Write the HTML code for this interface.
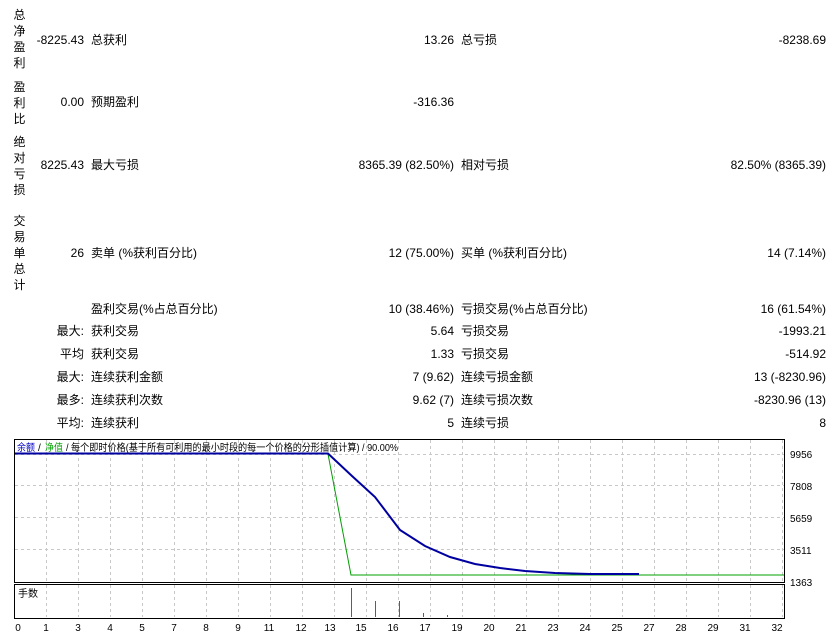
<!DOCTYPE html>
<html><head><meta charset="utf-8"><style>
body{margin:0;width:839px;height:638px;background:#fff;position:relative;overflow:hidden;font-family:"Liberation Sans","Noto Sans CJK SC",sans-serif;font-size:12px;color:#000}
.t{position:absolute;white-space:nowrap;line-height:14px}
.r{text-align:right}
.v{position:absolute;left:13px;width:13px;line-height:16px;text-align:center}
</style></head><body>
<div class="v" style="top:7px">总<br>净<br>盈<br>利</div>
<div class="v" style="top:79px">盈<br>利<br>比</div>
<div class="v" style="top:134px">绝<br>对<br>亏<br>损</div>
<div class="v" style="top:213px">交<br>易<br>单<br>总<br>计</div>

<div class="t r" style="right:755px;top:33px">-8225.43</div><div class="t" style="left:91px;top:33px">总获利</div>
<div class="t r" style="right:385px;top:33px">13.26</div><div class="t" style="left:461px;top:33px">总亏损</div>
<div class="t r" style="right:13px;top:33px">-8238.69</div>

<div class="t r" style="right:755px;top:95px">0.00</div><div class="t" style="left:91px;top:95px">预期盈利</div>
<div class="t r" style="right:385px;top:95px">-316.36</div>

<div class="t r" style="right:755px;top:158px">8225.43</div><div class="t" style="left:91px;top:158px">最大亏损</div>
<div class="t r" style="right:385px;top:158px">8365.39 (82.50%)</div><div class="t" style="left:461px;top:158px">相对亏损</div>
<div class="t r" style="right:13px;top:158px">82.50% (8365.39)</div>

<div class="t r" style="right:755px;top:246px">26</div><div class="t" style="left:91px;top:246px">卖单 (%获利百分比)</div>
<div class="t r" style="right:385px;top:246px">12 (75.00%)</div><div class="t" style="left:461px;top:246px">买单 (%获利百分比)</div>
<div class="t r" style="right:13px;top:246px">14 (7.14%)</div>

<div class="t" style="left:91px;top:302px">盈利交易(%占总百分比)</div>
<div class="t r" style="right:385px;top:302px">10 (38.46%)</div><div class="t" style="left:461px;top:302px">亏损交易(%占总百分比)</div>
<div class="t r" style="right:13px;top:302px">16 (61.54%)</div>

<div class="t r" style="right:755px;top:324px">最大:</div><div class="t" style="left:91px;top:324px">获利交易</div>
<div class="t r" style="right:385px;top:324px">5.64</div><div class="t" style="left:461px;top:324px">亏损交易</div>
<div class="t r" style="right:13px;top:324px">-1993.21</div>

<div class="t r" style="right:755px;top:347px">平均</div><div class="t" style="left:91px;top:347px">获利交易</div>
<div class="t r" style="right:385px;top:347px">1.33</div><div class="t" style="left:461px;top:347px">亏损交易</div>
<div class="t r" style="right:13px;top:347px">-514.92</div>

<div class="t r" style="right:755px;top:370px">最大:</div><div class="t" style="left:91px;top:370px">连续获利金额</div>
<div class="t r" style="right:385px;top:370px">7 (9.62)</div><div class="t" style="left:461px;top:370px">连续亏损金额</div>
<div class="t r" style="right:13px;top:370px">13 (-8230.96)</div>

<div class="t r" style="right:755px;top:393px">最多:</div><div class="t" style="left:91px;top:393px">连续获利次数</div>
<div class="t r" style="right:385px;top:393px">9.62 (7)</div><div class="t" style="left:461px;top:393px">连续亏损次数</div>
<div class="t r" style="right:13px;top:393px">-8230.96 (13)</div>

<div class="t r" style="right:755px;top:416px">平均:</div><div class="t" style="left:91px;top:416px">连续获利</div>
<div class="t r" style="right:385px;top:416px">5</div><div class="t" style="left:461px;top:416px">连续亏损</div>
<div class="t r" style="right:13px;top:416px">8</div>

<svg style="position:absolute;left:0;top:0" width="839" height="638" font-family="Liberation Sans, Noto Sans CJK SC, sans-serif" font-size="10">
<g stroke="#c8c8c8" stroke-dasharray="3,3" stroke-width="1">
<path d="M46.5 440V582M78.5 440V582M110.5 440V582M142.5 440V582M174.5 440V582M206.5 440V582M238.5 440V582M270.5 440V582M302.5 440V582M334.5 440V582M366.5 440V582M398.5 440V582M430.5 440V582M462.5 440V582M494.5 440V582M526.5 440V582M558.5 440V582M590.5 440V582M622.5 440V582M654.5 440V582M686.5 440V582M718.5 440V582M750.5 440V582M782.5 440V582"/>
<path d="M46.5 585V617M78.5 585V617M110.5 585V617M142.5 585V617M174.5 585V617M206.5 585V617M238.5 585V617M270.5 585V617M302.5 585V617M334.5 585V617M366.5 585V617M398.5 585V617M430.5 585V617M462.5 585V617M494.5 585V617M526.5 585V617M558.5 585V617M590.5 585V617M622.5 585V617M654.5 585V617M686.5 585V617M718.5 585V617M750.5 585V617M782.5 585V617"/>
<path d="M15 454.5H784M15 485.5H784M15 517.5H784M15 549.5H784"/>
</g>
<rect x="14.5" y="439.5" width="770" height="143" fill="none" stroke="#000"/>
<rect x="14.5" y="584.5" width="770" height="34" fill="none" stroke="#000"/>
<polyline points="328,454 351,575 784,575" fill="none" stroke="#00a000" stroke-width="1"/>
<polyline points="15,453.5 328,453.5 352,476 375,497 400,530 425,546 450,557 475,564 500,568 525,571 555,573 590,574 639,574" fill="none" stroke="#0000a0" stroke-width="2"/>
<g stroke="#00a000"><path d="M351.5 588V617M375.5 601V617M399.5 601V617M423.5 613V617M447.5 615V617"/></g>
<text x="17" y="451" fill="#0000c0" textLength="18" lengthAdjust="spacingAndGlyphs">余额</text><text x="38" y="451">/</text><text x="45" y="451" fill="#00a000" textLength="18" lengthAdjust="spacingAndGlyphs">净值</text><text x="66" y="451" textLength="332" lengthAdjust="spacingAndGlyphs">/ 每个即时价格(基于所有可利用的最小时段的每一个价格的分形插值计算) / 90.00%</text>
<text x="18" y="597">手数</text>
<g font-size="10"><text x="790" y="458">9956</text><text x="790" y="490">7808</text><text x="790" y="522">5659</text><text x="790" y="554">3511</text><text x="790" y="586">1363</text></g>
<g font-size="10" text-anchor="middle">
<text x="18" y="631">0</text><text x="46" y="631">1</text><text x="78" y="631">3</text><text x="110" y="631">4</text><text x="142" y="631">5</text><text x="174" y="631">7</text><text x="206" y="631">8</text><text x="238" y="631">9</text><text x="269" y="631">11</text><text x="301" y="631">12</text><text x="330" y="631">13</text><text x="361" y="631">15</text><text x="393" y="631">16</text><text x="425" y="631">17</text><text x="457" y="631">19</text><text x="489" y="631">20</text><text x="521" y="631">21</text><text x="553" y="631">23</text><text x="585" y="631">24</text><text x="617" y="631">25</text><text x="649" y="631">27</text><text x="681" y="631">28</text><text x="713" y="631">29</text><text x="745" y="631">31</text><text x="777" y="631">32</text>
</g>
</svg>
</body></html>
